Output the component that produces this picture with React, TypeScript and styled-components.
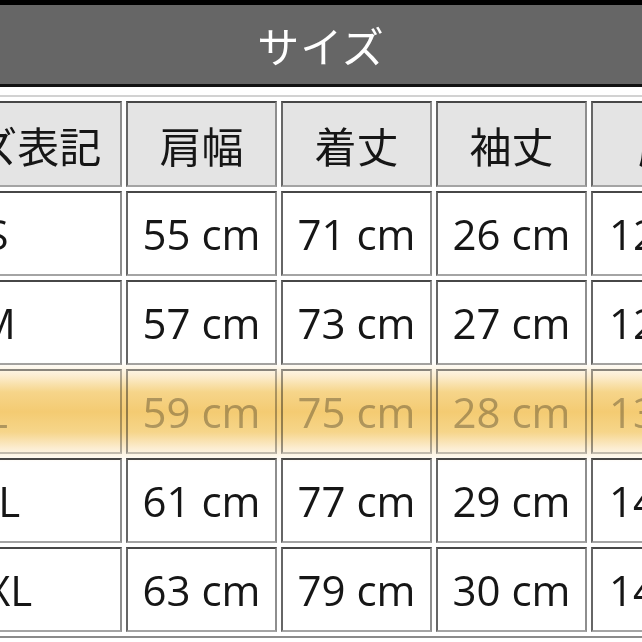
import { createGlobalStyle, styled } from 'styled-components'

const GlobalStyle = createGlobalStyle`
	html, body {
		margin: 0;
		padding: 0;
		background: #fff;
	}
	body {
		font-family: "Open Sans", "Noto Sans CJK JP", sans-serif;
	}
`

const headers = ['サイズ表記', '肩幅', '着丈', '袖丈', '胸囲']

const rows = [
	{ size: 'S', values: [55, 71, 26, 122] },
	{ size: 'M', values: [57, 73, 27, 128] },
	{ size: 'L', values: [59, 75, 28, 134], marked: true },
	{ size: 'XL', values: [61, 77, 29, 140] },
	{ size: 'XXL', values: [63, 79, 30, 146] },
]

export default function App() {
	return <>
		<GlobalStyle/>
		<Page>
			<TitleBar>サイズ</TitleBar>

			<SizeTable>
				{headers.map(h => <HeadCell key={h}>{h}</HeadCell>)}

				{rows.map(row => <>
					<Cell key={row.size} $marked={!!row.marked}>{row.size}</Cell>
					{row.values.map((v, i) =>
						<Cell key={row.size + i} $marked={!!row.marked}>{v} cm</Cell>
					)}
				</>)}
			</SizeTable>

			{/* highlighter stroke over the L row */}
			<Highlight/>
		</Page>
	</>
}

const Page = styled.div`
	position: relative;
	width: 642px;
	height: 642px;
	overflow: hidden;
`

const TitleBar = styled.div`
	height: 79px;
	background: #666666;
	border-top: 5px solid #000;
	border-bottom: 3px solid #111;

	display: flex;
	align-items: center;
	justify-content: center;

	color: #fff;
	font-size: 42px;
	letter-spacing: 1px;
`

const SizeTable = styled.div`
	display: grid;
	grid-template-columns: 250px repeat(3, 151px) 178px;
	grid-template-rows: 86px;
	grid-auto-rows: 85px;
	gap: 4px;
	padding: 4px;

	width: max-content;
	margin-top: 8px;
	margin-left: -134px;

	border: 2px solid;
	border-color: #d2d2d2 #7a7a7a #8a8a8a #d2d2d2;
`

const Cell = styled.div<{ $marked?: boolean }>`
	box-sizing: border-box;
	display: flex;
	align-items: center;
	justify-content: center;
	white-space: nowrap;

	font-size: 42px;
	color: ${p => p.$marked ? '#b6b6b6' : '#161616'};
	background: #fff;

	border: 2px solid;
	border-color: ${p => p.$marked
		? '#8a8a8a #b0b0b0 #c4c4c4 #9a9a9a'
		: '#474747 #8e8e8e #a4a4a4 #666'};
`

const HeadCell = styled(Cell)`
	background: #e4e4e4;
`

const Highlight = styled.div`
	position: absolute;
	left: 0;
	right: 0;
	top: 362px;
	height: 100px;
	pointer-events: none;
	mix-blend-mode: multiply;
	background: linear-gradient(to bottom,
		#ffffff 0%,
		#fcedd0 14%,
		#f6d58a 30%,
		#f4cb72 50%,
		#f6d58a 70%,
		#fcedd0 86%,
		#ffffff 100%);
`
